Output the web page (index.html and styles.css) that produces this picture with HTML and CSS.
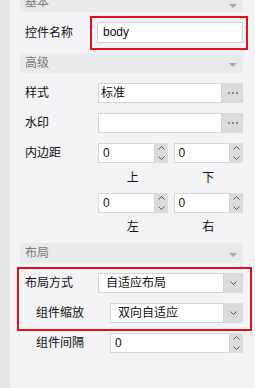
FILE: index.html
```html
<!DOCTYPE html>
<html>
<head lang="zh">
    <meta charset="UTF-8">
    <title>属性面板</title>
    <link rel="stylesheet" href="styles.css">
</head>
<body>
<div class="wrap">
    <div class="side"></div>
    <div class="panel">
        <div class="head head-top">基本<i class="tri"></i></div>
        <div class="row-name">
            <span class="label">控件名称</span>
            <div class="mark mark-name"><div class="field field-name">body</div></div>
        </div>

        <div class="head">高级<i class="tri"></i></div>
        <div class="row">
            <span class="label">样式</span>
            <div class="field field-style">标准</div>
            <div class="more"><b></b><b></b><b></b></div>
        </div>
        <div class="row">
            <span class="label">水印</span>
            <div class="field"></div>
            <div class="more"><b></b><b></b><b></b></div>
        </div>
        <div class="row">
            <span class="label">内边距</span>
            <div class="pair">
                <div class="spin"><div class="field">0</div><div class="arrows"><svg width="7" height="4"><polyline points="0.5,3.5 3.5,0.5 6.5,3.5"/></svg><svg width="7" height="4"><polyline points="0.5,0.5 3.5,3.5 6.5,0.5"/></svg></div></div>
                <div class="spin"><div class="field">0</div><div class="arrows"><svg width="7" height="4"><polyline points="0.5,3.5 3.5,0.5 6.5,3.5"/></svg><svg width="7" height="4"><polyline points="0.5,0.5 3.5,3.5 6.5,0.5"/></svg></div></div>
            </div>
        </div>
        <div class="sub sub-top"><span>上</span><span>下</span></div>
        <div class="row row-tight">
            <span class="label"></span>
            <div class="pair">
                <div class="spin"><div class="field">0</div><div class="arrows"><svg width="7" height="4"><polyline points="0.5,3.5 3.5,0.5 6.5,3.5"/></svg><svg width="7" height="4"><polyline points="0.5,0.5 3.5,3.5 6.5,0.5"/></svg></div></div>
                <div class="spin"><div class="field">0</div><div class="arrows"><svg width="7" height="4"><polyline points="0.5,3.5 3.5,0.5 6.5,3.5"/></svg><svg width="7" height="4"><polyline points="0.5,0.5 3.5,3.5 6.5,0.5"/></svg></div></div>
            </div>
        </div>
        <div class="sub sub-bottom"><span>左</span><span>右</span></div>

        <div class="head">布局<i class="tri"></i></div>
        <div class="mark mark-layout">
            <div class="row row-first">
                <span class="label">布局方式</span>
                <div class="field field-select">自适应布局</div>
                <div class="drop"><svg width="7" height="4"><polyline points="0.5,0.5 3.5,3.5 6.5,0.5"/></svg></div>
            </div>
            <div class="row">
                <span class="label indent">组件缩放</span>
                <div class="field field-select">双向自适应</div>
                <div class="drop"><svg width="7" height="4"><polyline points="0.5,0.5 3.5,3.5 6.5,0.5"/></svg></div>
            </div>
        </div>
        <div class="row row-gap">
            <span class="label indent">组件间隔</span>
            <div class="spin spin-wide"><div class="field">0</div><div class="arrows"><svg width="7" height="4"><polyline points="0.5,3.5 3.5,0.5 6.5,3.5"/></svg><svg width="7" height="4"><polyline points="0.5,0.5 3.5,3.5 6.5,0.5"/></svg></div></div>
        </div>
    </div>
</div>
</body>
</html>
```

FILE: styles.css
```css
*{
    margin: 0;
    padding: 0;
    box-sizing: border-box;
}
body{
    background-color: #f3f3f5;
    font-family: "Liberation Sans", "Noto Sans CJK SC", sans-serif;
    font-size: 12px;
    color: #111;
    overflow: hidden;
}
.wrap{
    display: flex;
    height: 388px;
}
.side{
    width: 10px;
    background-color: #e6e6e8;
}
.panel{
    flex: 1;
    padding: 0 12px 0 10px;
}

/* section headers */
.head{
    position: relative;
    height: 20px;
    line-height: 20px;
    padding-left: 5px;
    background-color: #eaeaec;
    color: #777;
}
.head-top{
    margin-top: -8px;
}
.tri{
    position: absolute;
    right: 6px;
    top: 10px;
    border-left: 4px solid transparent;
    border-right: 4px solid transparent;
    border-top: 4px solid #a8a8aa;
}
.head-top .tri{
    top: 12px;
}

/* rows */
.row{
    display: flex;
    align-items: center;
    height: 20px;
    margin-top: 10px;
}
.row-tight{
    margin-top: 0;
}
.label{
    width: 78px;
    padding-left: 5px;
    flex-shrink: 0;
    line-height: 20px;
    white-space: nowrap;
}
.label.indent{
    width: 90px;
    padding-left: 16px;
}
.field{
    flex: 1;
    height: 20px;
    line-height: 18px;
    padding-left: 4px;
    background-color: #fff;
    border: 1px solid #d4d4d6;
    white-space: nowrap;
}
.field-style{
    padding-left: 2px;
}
.field-select{
    padding-left: 7px;
}

/* red marks */
.mark{
    border: 2px solid #e0101e;
}
.row-name{
    display: flex;
    align-items: center;
    margin: 4px 0 3px;
}
.row-name .label{
    width: 70px;
}
.mark-name{
    flex: 1;
    margin-right: -5px;
    padding: 4px 3px 5px 5px;
}
.field-name{
    height: 21px;
    line-height: 19px;
    padding-left: 5px;
}
.mark-layout{
    margin: 4px -9px 0 -3px;
    padding: 4px 7px 6px 1px;
}
.row-first{
    margin-top: 0;
}
.row-gap{
    margin-top: 2px;
}

/* buttons */
.more{
    display: flex;
    align-items: center;
    justify-content: center;
    gap: 2px;
    width: 21px;
    height: 20px;
    background-color: #dcdcde;
}
.more b{
    width: 2px;
    height: 2px;
    background-color: #8a8a8a;
}
.drop{
    display: flex;
    align-items: center;
    justify-content: center;
    width: 19px;
    height: 20px;
    background-color: #dcdcde;
}
svg polyline{
    fill: none;
    stroke: #555;
    stroke-width: 1;
}

/* spinners */
.pair{
    flex: 1;
    display: flex;
    gap: 6px;
}
.spin{
    flex: 1;
    display: flex;
    height: 20px;
}
.arrows{
    display: flex;
    flex-direction: column;
    justify-content: space-between;
    align-items: center;
    width: 13px;
    padding: 3px 0 3px;
    background-color: #dcdcde;
}
.sub{
    display: flex;
    gap: 6px;
    margin-left: 78px;
    height: 14px;
    line-height: 14px;
}
.sub span{
    flex: 1;
    text-align: center;
}
.sub-top{
    margin-top: 8px;
    margin-bottom: 8px;
}
.sub-bottom{
    margin-top: 7px;
    margin-bottom: 9px;
}
```
